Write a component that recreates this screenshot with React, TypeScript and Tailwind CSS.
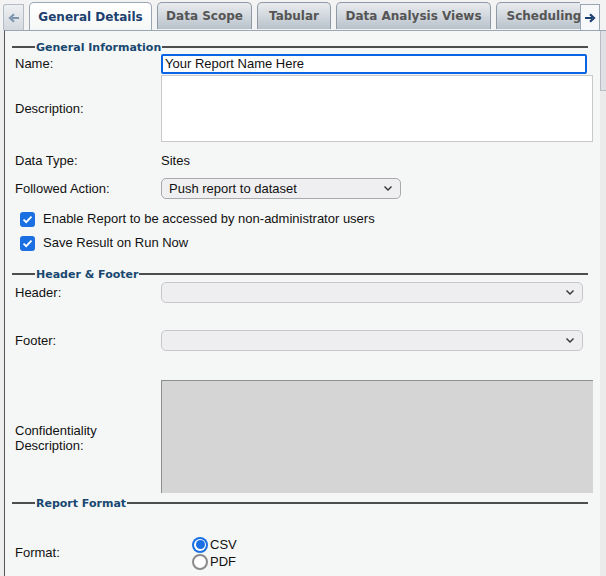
import React from "react";

const tabs = [
  { label: "General Details", width: 123, active: true },
  { label: "Data Scope", width: 95 },
  { label: "Tabular", width: 74 },
  { label: "Data Analysis Views", width: 155 },
  { label: "Scheduling", width: 96 },
];

const verdana = { fontFamily: '"DejaVu Sans", Verdana, sans-serif' };

function Legend({ title }: { title: string }) {
  return (
    <div className="flex h-[14px] items-center pr-[5px]">
      <div className="h-[2px] w-[23px] bg-[#4d4d4d]" />
      <span
        className="px-[1px] text-[11px] font-bold leading-none text-[#184770]"
        style={verdana}
      >
        {title}
      </span>
      <div className="h-[2px] flex-1 bg-[#4d4d4d]" />
    </div>
  );
}

function Chevron() {
  return (
    <svg width="10" height="7" viewBox="0 0 10 7" className="shrink-0">
      <path d="M1.5 1.5 L5 5 L8.5 1.5" fill="none" stroke="#333" strokeWidth="1.4" />
    </svg>
  );
}

function Checkbox({ label }: { label: string }) {
  return (
    <div className="flex h-[20px] items-center pl-[8px]">
      <div className="flex h-[15px] w-[15px] items-center justify-center rounded-[3px] bg-[#1a6fe3]">
        <svg width="11" height="9" viewBox="0 0 11 9">
          <path d="M1.5 4.6 L4.2 7.2 L9.5 1.6" fill="none" stroke="#fff" strokeWidth="1.9" />
        </svg>
      </div>
      <span className="ml-[8px]">{label}</span>
    </div>
  );
}

function Radio({ label, checked }: { label: string; checked?: boolean }) {
  return (
    <div className="flex h-[17px] items-center">
      {checked ? (
        <div className="flex h-[16px] w-[16px] items-center justify-center rounded-full bg-[#1a6fe3]">
          <div className="flex h-[12px] w-[12px] items-center justify-center rounded-full bg-white">
            <div className="h-[9px] w-[9px] rounded-full bg-[#1a6fe3]" />
          </div>
        </div>
      ) : (
        <div className="h-[16px] w-[16px] rounded-full border-2 border-[#8a8a8a] bg-white" />
      )}
      <span className="ml-[2px] leading-none">{label}</span>
    </div>
  );
}

export default function App() {
  return (
    <div
      className="flex h-[576px] w-[606px] flex-col overflow-hidden bg-[#eeeeee] text-[13px] text-[#111]"
      style={{ fontFamily: '"Liberation Sans", Arial, sans-serif' }}
    >
      {/* tab strip */}
      <div className="flex h-[30px] items-end bg-[#f3f3f3]" style={verdana}>
        <div className="ml-[3px] flex h-[26px] w-[21px] items-center justify-center rounded-tl-[3px] border border-b-0 border-[#b4bcc6] bg-gradient-to-b from-[#eef0f3] to-[#d3d8de]">
          <svg width="12" height="10" viewBox="0 0 12 10">
            <path d="M11 5 H4 M6 1.2 L2 5 L6 8.8" fill="none" stroke="#7f96b0" strokeWidth="2.2" />
          </svg>
        </div>
        <div className="ml-[5px] flex flex-1 gap-[5px] overflow-hidden">
          {tabs.map((t) => (
            <div
              key={t.label}
              className={
                t.active
                  ? "relative z-10 -mb-px flex h-[29px] shrink-0 items-center justify-center rounded-t-[5px] border border-b-0 border-[#9aa6b3] bg-gradient-to-b from-[#ffffff] to-[#f5f7f6] text-[12px] font-bold text-[#1b3f6e]"
                  : "flex h-[27px] shrink-0 items-center justify-center rounded-t-[5px] border border-b-0 border-[#8f9aa6] bg-gradient-to-b from-[#e9ecef] to-[#b9c2cb] text-[12px] font-bold text-[#555]"
              }
              style={{ width: t.width }}
            >
              {t.label}
            </div>
          ))}
        </div>
        <div className="mr-[6px] flex h-[26px] w-[20px] items-center justify-center border border-b-0 border-[#9aa6b3] bg-[#f7f8fa]">
          <svg width="12" height="10" viewBox="0 0 12 10">
            <path d="M1 5 H8 M6 1.2 L10 5 L6 8.8" fill="none" stroke="#1b3f6e" strokeWidth="2.2" />
          </svg>
        </div>
      </div>

      {/* panel */}
      <div className="ml-[4px] flex flex-1 border-l border-t border-l-[#555] border-t-[#9aa6b3] bg-[#f5f7f6]">
        <div className="flex-1 px-[7px] pt-[9px]">
          <Legend title="General Information" />

          <div className="flex h-[20px] items-center">
            <div className="w-[149px] pl-[3px]">Name:</div>
            <div className="mr-[6px] flex h-[20px] flex-1 items-center rounded-[2px] border-2 border-[#0b63e5] bg-white px-[2px]">
              Your Report Name Here
            </div>
          </div>

          <div className="mt-[1px] flex h-[67px] items-center">
            <div className="w-[149px] pl-[3px]">Description:</div>
            <div className="h-full flex-1 border border-[#c9c9c9] bg-white" />
          </div>

          <div className="mt-[9px] flex h-[20px] items-center">
            <div className="w-[149px] pl-[3px]">Data Type:</div>
            <div>Sites</div>
          </div>

          <div className="mt-[7px] flex h-[21px] items-center">
            <div className="w-[149px] pl-[3px]">Followed Action:</div>
            <div className="flex h-[21px] w-[240px] items-center justify-between rounded-[5px] border border-[#a9a9ae] bg-[#efeff1] pl-[7px] pr-[7px]">
              <span>Push report to dataset</span>
              <Chevron />
            </div>
          </div>

          <div className="mt-[10px]">
            <Checkbox label="Enable Report to be accessed by non-administrator users" />
          </div>
          <div className="mt-[4px]">
            <Checkbox label="Save Result on Run Now" />
          </div>

          <div className="mt-[14px]">
            <Legend title="Header & Footer" />
          </div>

          <div className="mt-[1px] flex h-[21px] items-center">
            <div className="w-[149px] pl-[3px]">Header:</div>
            <div className="mr-[10px] flex h-[21px] flex-1 items-center justify-end rounded-[5px] border border-[#c6c6cb] bg-[#eeeef0] pr-[7px]">
              <Chevron />
            </div>
          </div>

          <div className="mt-[27px] flex h-[21px] items-center">
            <div className="w-[149px] pl-[3px]">Footer:</div>
            <div className="mr-[10px] flex h-[21px] flex-1 items-center justify-end rounded-[5px] border border-[#c6c6cb] bg-[#eeeef0] pr-[7px]">
              <Chevron />
            </div>
          </div>

          <div className="mt-[29px] flex h-[113px] items-center">
            <div className="w-[149px] pl-[3px] pt-[3px] leading-[15px]">
              Confidentiality
              <br />
              Description:
            </div>
            <div className="h-full flex-1 border-l border-t border-[#8e8e8e] bg-[#d5d5d5]" />
          </div>

          <div className="mt-[3px]">
            <Legend title="Report Format" />
          </div>

          <div className="mt-[26px] flex items-center">
            <div className="w-[180px] pl-[3px]">Format:</div>
            <div className="flex flex-col">
              <Radio label="CSV" checked />
              <Radio label="PDF" />
            </div>
          </div>
        </div>

        {/* scrollbar */}
        <div className="w-[6px] bg-[#ebebeb]">
          <div className="h-[60px] border-b border-l border-[#b9bcc4] bg-[#dfe0e4]" />
        </div>
      </div>
    </div>
  );
}
